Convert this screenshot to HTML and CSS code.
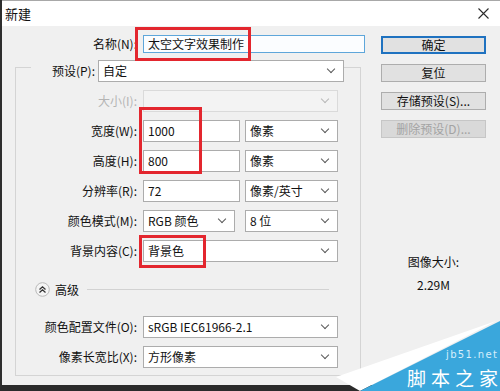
FILE: index.html
```html
<!DOCTYPE html>
<html lang="zh-CN">
<head>
  <meta charset="UTF-8">
  <title>新建</title>
  <link rel="stylesheet" href="styles.css">
</head>
<body>
  <div class="screen">
    <div class="window">
      <div class="titlebar">
        <span class="title">新建</span>
        <svg class="close" width="11" height="11" viewBox="0 0 11 11">
          <path d="M0.5 0.5L10.5 10.5M10.5 0.5L0.5 10.5" stroke="#2b2b2b" stroke-width="1.1" fill="none"/>
        </svg>
      </div>

      <div class="content">
        <div class="left">
          <div class="name-row">
            <label>名称(N):</label>
            <div class="field name-field">太空文字效果制作</div>
          </div>

          <fieldset class="group">
            <legend class="preset">
              <label>预设(P):</label>
              <div class="field select preset-select">自定</div>
            </legend>

            <div class="rows">
              <div class="form-row disabled">
                <label>大小(I):</label>
                <div class="field select full"></div>
              </div>
              <div class="form-row">
                <label>宽度(W):</label>
                <div class="pair">
                  <div class="field num">1000</div>
                  <div class="field select unit">像素</div>
                </div>
              </div>
              <div class="form-row">
                <label>高度(H):</label>
                <div class="pair">
                  <div class="field num">800</div>
                  <div class="field select unit">像素</div>
                </div>
              </div>
              <div class="form-row">
                <label>分辨率(R):</label>
                <div class="pair">
                  <div class="field num">72</div>
                  <div class="field select unit">像素/英寸</div>
                </div>
              </div>
              <div class="form-row">
                <label>颜色模式(M):</label>
                <div class="pair wide-gap">
                  <div class="field select mode">RGB 颜色</div>
                  <div class="field select unit">8 位</div>
                </div>
              </div>
              <div class="form-row">
                <label>背景内容(C):</label>
                <div class="field select full">背景色</div>
              </div>
            </div>

            <div class="advanced">
              <svg class="adv-icon" width="15" height="15" viewBox="0 0 15 15">
                <circle cx="7.5" cy="7.5" r="6.8" fill="#f4f4f4" stroke="#b9b9b9" stroke-width="1"/>
                <path d="M4.5 7.5L7.5 4.8L10.5 7.5M4.5 10.5L7.5 7.8L10.5 10.5" stroke="#333" stroke-width="1.3" fill="none"/>
              </svg>
              <span>高级</span>
              <div class="adv-line"></div>
            </div>

            <div class="rows adv-rows">
              <div class="form-row">
                <label>颜色配置文件(O):</label>
                <div class="field select full">sRGB IEC61966-2.1</div>
              </div>
              <div class="form-row">
                <label>像素长宽比(X):</label>
                <div class="field select full">方形像素</div>
              </div>
            </div>
          </fieldset>
        </div>

        <div class="right">
          <div class="buttons">
            <button class="btn default">确定</button>
            <button class="btn">复位</button>
            <button class="btn">存储预设(S)...</button>
            <button class="btn" disabled>删除预设(D)...</button>
          </div>
          <div class="info">
            <div>图像大小:</div>
            <div class="info-value">2.29M</div>
          </div>
        </div>
      </div>
    </div>

    <!-- annotations -->
    <div class="mark mark-name"></div>
    <div class="mark mark-size"></div>
    <div class="mark mark-bg"></div>

    <svg class="watermark" width="170" height="81" viewBox="0 0 170 81">
      <polygon points="6,67 166,11 30,81" fill="#ffffff"/>
      <polygon points="30,81 170,11 170,81" fill="#3aa7dc"/>
      <text x="116" y="48" textLength="51" class="wm-url">jb51.net</text>
      <text x="77" y="76" textLength="91" class="wm-name">脚本之家</text>
    </svg>
  </div>
</body>
</html>
```

FILE: styles.css
```css
body {
  margin: 0;
  font-family: "Noto Sans CJK SC", "Noto Sans", sans-serif;
  font-size: 12px;
  color: #111;
}
.screen {
  position: relative;
  width: 500px;
  height: 391px;
  overflow: hidden;
}
.window {
  width: 500px;
  height: 391px;
  box-sizing: border-box;
  background-color: #f0f0f0;
  border-left: 2px solid #2e2e2e;
  border-bottom: 6px solid #2b2b2b;
}
.titlebar {
  height: 26px;
  box-sizing: border-box;
  background-color: #fff;
  border-top: 1px solid #a8a8a8;
  display: flex;
  align-items: center;
  justify-content: space-between;
  padding: 0 11px 1px 3px;
}
.title {
  font-size: 13px;
}
.content {
  display: flex;
}
.left {
  width: 363px;
  padding-top: 9px;
}
.name-row {
  display: grid;
  grid-template-columns: 135px 222px;
  column-gap: 6px;
  align-items: center;
  height: 18px;
}
label {
  text-align: right;
  white-space: nowrap;
  line-height: 16px;
}
.field {
  position: relative;
  box-sizing: border-box;
  height: 22px;
  line-height: 20px;
  padding-left: 4px;
  background-color: #fff;
  border: 1px solid #acacac;
  white-space: nowrap;
}
.select::after {
  content: "";
  position: absolute;
  right: 9px;
  top: 5px;
  width: 5px;
  height: 5px;
  border-right: 1px solid #5a5a5a;
  border-bottom: 1px solid #5a5a5a;
  transform: rotate(45deg);
}
.name-field {
  height: 18px;
  line-height: 16px;
  border-color: #5ea6da;
  background-color: #fbfdff;
}

/* group box */
.group {
  margin: 0 0 0 13px;
  padding: 0 0 7px 0;
  width: 346px;
  box-sizing: border-box;
  border: 1px solid #d4d4d4;
  min-width: 0;
}
.preset {
  display: flex;
  align-items: center;
  margin-left: 15px;
  padding: 7px 0 0 0;
}
.preset label {
  width: 64px;
}
.preset-select {
  margin-left: 3px;
  width: 246px;
}
.rows {
  display: flex;
  flex-direction: column;
  gap: 8px;
  padding-top: 8px;
}
.form-row {
  display: grid;
  grid-template-columns: 121px 195px;
  column-gap: 6px;
  align-items: center;
}
.form-row.disabled label {
  color: #b4b4b4;
}
.form-row.disabled .field {
  background-color: #f3f3f3;
  border-color: #dadada;
}
.form-row.disabled .select::after {
  border-color: #b8b8b8;
}
.pair {
  display: flex;
  gap: 5px;
}
.pair.wide-gap {
  gap: 10px;
}
.num {
  width: 97px;
}
.unit {
  width: 93px;
}
.mode {
  width: 92px;
}
.full {
  width: 195px;
}
.advanced {
  display: flex;
  align-items: center;
  height: 16px;
  margin-top: 19px;
  padding-left: 19px;
  gap: 5px;
}
.adv-line {
  flex: 1;
  height: 1px;
  margin: 1px 31px 0 3px;
  background-color: #d2d2d2;
}
.adv-rows {
  padding-top: 19px;
}

/* right column */
.right {
  width: 105px;
  margin-left: 16px;
  padding-top: 10px;
}
.buttons {
  display: flex;
  flex-direction: column;
  gap: 10px;
}
.btn {
  height: 18px;
  padding: 0;
  font-family: inherit;
  font-size: 12px;
  line-height: 16px;
  color: #111;
  background-color: #e1e1e1;
  border: 1px solid #adadad;
}
.btn.default {
  border-color: #1f72c0;
  box-shadow: inset 0 0 0 1px #1f72c0;
}
.btn:disabled {
  color: #a3a3a3;
  background-color: #d9d9d9;
  border-color: #c6c6c6;
}
.info {
  margin-top: 116px;
  text-align: center;
  line-height: 16px;
}
.info-value {
  margin-top: 7px;
}

/* red annotation boxes */
.mark {
  position: absolute;
  border: 3px solid #e3262e;
}
.mark-name {
  left: 135px;
  top: 27px;
  width: 110px;
  height: 28px;
}
.mark-size {
  left: 139px;
  top: 107px;
  width: 57px;
  height: 61px;
}
.mark-bg {
  left: 139px;
  top: 235px;
  width: 61px;
  height: 27px;
}
.watermark {
  position: absolute;
  right: 0;
  bottom: 0;
}
.wm-url {
  font-family: "DejaVu Sans", sans-serif;
  font-size: 10px;
  fill: #d6eefb;
}
.wm-name {
  font-family: "Noto Sans CJK SC", sans-serif;
  font-size: 19px;
  fill: #fff;
}
```
